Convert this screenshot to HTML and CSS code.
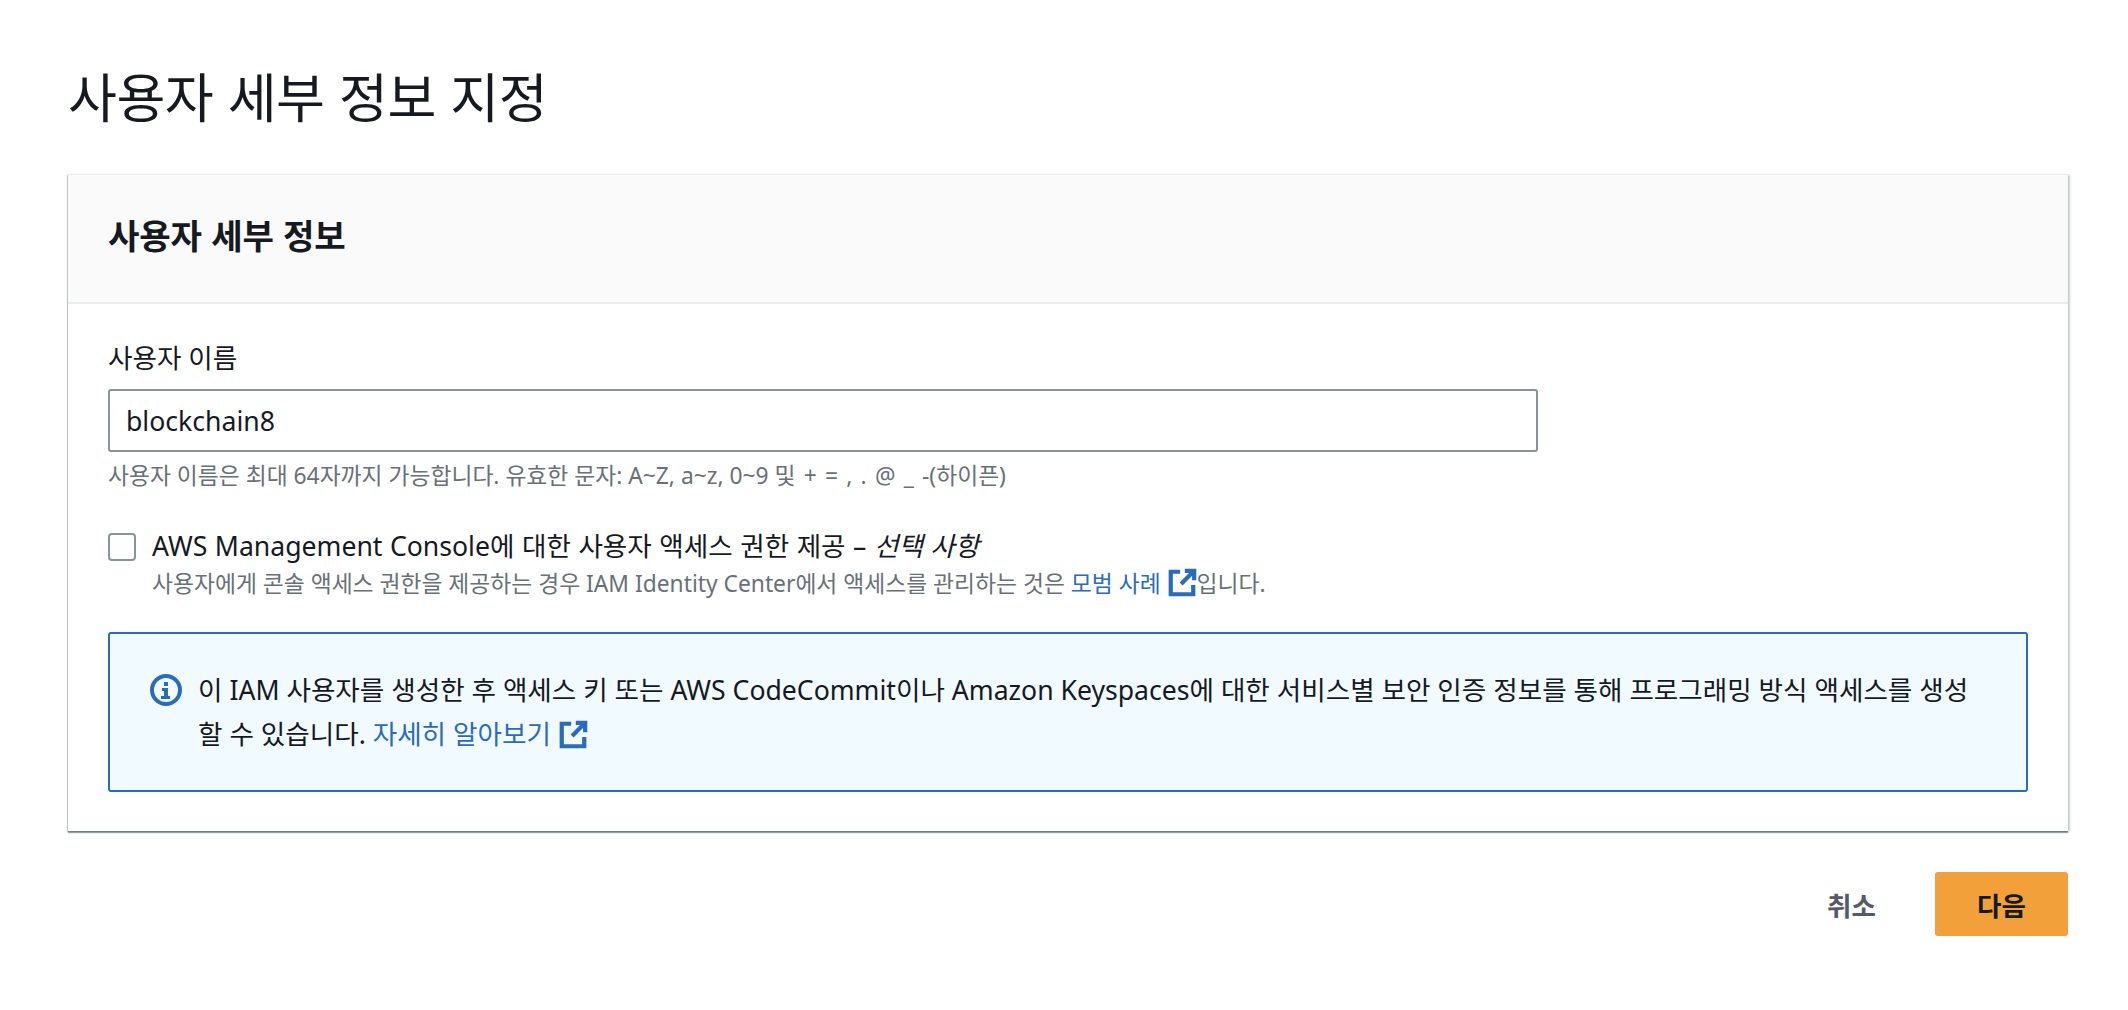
FILE: index.html
```html
<!DOCTYPE html>
<html lang="ko">
<head>
  <meta charset="UTF-8">
  <title>사용자 세부 정보 지정</title>
  <link rel="stylesheet" href="styles.css">
</head>
<body>

  <h1 class="page-title">사용자 세부 정보 지정</h1>

  <section class="card">
    <div class="card-header">
      <h2>사용자 세부 정보</h2>
    </div>

    <div class="card-body">
      <label class="field-label" for="username">사용자 이름</label>
      <input class="text-input" type="text" id="username" value="blockchain8">
      <p class="hint">사용자 이름은 최대 64자까지 가능합니다. 유효한 문자: A~Z, a~z, 0~9 <span class="symbols">및 + = , . @ _ -(하이픈)</span></p>

      <div class="check-row">
        <span class="checkbox"></span>
        <div>
          <div class="check-label">AWS Management Console에 대한 사용자 액세스 권한 제공 – <em>선택 사항</em></div>
          <p class="check-hint">사용자에게 콘솔 액세스 권한을 제공하는 경우 IAM Identity Center에서 액세스를 관리하는 것은 <a href="#">모범 사례
            <svg class="ext-icon" viewBox="0 0 32 32"><path d="M14 4H4v24h24V18M19 3h10v10M29 3 15 17"/></svg></a>입니다.</p>
        </div>
      </div>

      <div class="notice">
        <svg class="info-icon" viewBox="0 0 32 32">
          <circle cx="16" cy="16" r="14"/>
          <rect class="fill" x="14" y="8" width="4" height="4"/>
          <path class="fill" d="M12 14h6v8h2v3h-9v-3h3v-5h-2z"/>
        </svg>
        <p>이 IAM 사용자를 생성한 후 액세스 키 또는 AWS CodeCommit이나 Amazon Keyspaces에 대한 서비스별 보안 인증 정보를 통해 프로그래밍 방식 액세스를 생성할 수 있습니다. <a href="#">자세히 알아보기
          <svg class="ext-icon" viewBox="0 0 32 32"><path d="M14 4H4v24h24V18M19 3h10v10M29 3 15 17"/></svg></a></p>
      </div>
    </div>
  </section>

  <div class="actions">
    <button class="btn-cancel">취소</button>
    <button class="btn-next">다음</button>
  </div>

</body>
</html>
```

FILE: styles.css
```css
body {
  margin: 0;
  padding: 0 60px 0 68px;
  background: #fff;
  color: #16191f;
  font-family: "Noto Sans", "Noto Sans CJK KR", sans-serif;
  font-size: 26.6px;
}

.page-title {
  margin: 0;
  padding-top: 60px;
  height: 174px;
  box-sizing: border-box;
  font-size: 53.2px;
  line-height: 70px;
  font-weight: 400;
  letter-spacing: -0.5px;
  font-family: "Noto Sans CJK KR", sans-serif;
}

.card {
  box-shadow: 0 2px 1px 0 rgba(0,28,36,0.35), 2px 1px 2px 0 rgba(0,28,36,0.2), -1px 1px 1px 0 rgba(0,28,36,0.2);
  border-top: 1px solid #eaeded;
}

.card-header {
  height: 129px;
  box-sizing: border-box;
  padding: 0 40px 10px;
  display: flex;
  align-items: center;
  background: #fafafa;
  border-bottom: 2px solid #eaeded;
}

.card-header h2 {
  margin: 0;
  font-size: 34.2px;
  font-weight: 700;
  letter-spacing: -0.2px;
  font-family: "Noto Sans CJK KR", sans-serif;
}

.card-body {
  padding: 36px 40px 39px;
}

.field-label {
  display: block;
  line-height: 36px;
  margin-bottom: 13px;
}

.text-input {
  display: block;
  width: 1430px;
  height: 63px;
  box-sizing: border-box;
  padding: 0 16px;
  border: 2px solid #879596;
  border-radius: 3px;
  font: inherit;
  color: #16191f;
}

.hint {
  margin: 8px 0 0;
  font-size: 22.8px;
  line-height: 32px;
  color: #687078;
}

.symbols {
  word-spacing: 2.3px;
}

.check-row {
  display: flex;
  gap: 16px;
  margin-top: 35px;
}

.checkbox {
  width: 28px;
  height: 28px;
  box-sizing: border-box;
  margin-top: 6px;
  border: 2px solid #879596;
  border-radius: 4px;
  flex: none;
}

.check-label {
  line-height: 38px;
  word-spacing: 0.6px;
}

.check-hint {
  margin: 0;
  font-size: 22.8px;
  line-height: 38px;
  color: #687078;
}

a {
  color: #2b6cb8;
  text-decoration: none;
}

.ext-icon {
  width: 30px;
  height: 30px;
  vertical-align: -6px;
  fill: none;
  stroke: #2b6cb8;
  stroke-width: 4.5;
}

.notice {
  display: flex;
  gap: 16px;
  margin-top: 29px;
  height: 160px;
  box-sizing: border-box;
  padding: 34px 40px 0 40px;
  background: #f1faff;
  border: 2px solid #2b6cb8;
  border-radius: 3px;
}

.notice p {
  margin: 0;
  line-height: 44px;
}

.info-icon {
  width: 32px;
  height: 32px;
  flex: none;
  margin-top: 6px;
  fill: none;
  stroke: #2b6cb8;
  stroke-width: 4;
}

.info-icon .fill {
  fill: #2b6cb8;
  stroke: none;
}

.actions {
  display: flex;
  justify-content: flex-end;
  align-items: center;
  gap: 59px;
  margin-top: 41px;
}

.actions button {
  height: 64px;
  font: inherit;
  font-weight: 700;
  border: 0;
  border-radius: 3px;
  font-family: "Noto Sans CJK KR", sans-serif;
}

.btn-cancel {
  background: none;
  color: #545b64;
  padding: 0;
}

.btn-next {
  width: 133px;
  background: #f2a03a;
  color: #16191f;
}
```
